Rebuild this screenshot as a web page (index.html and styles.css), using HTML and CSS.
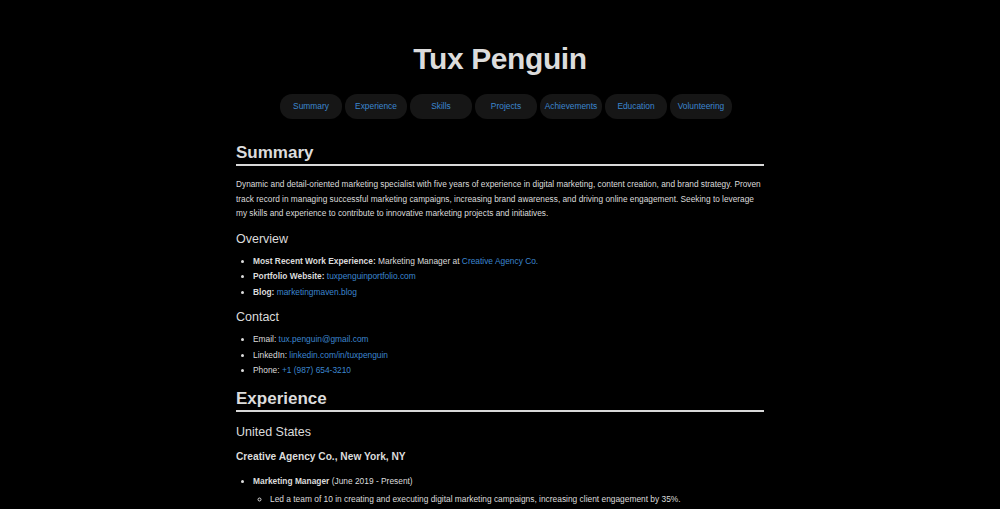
FILE: index.html
```html
<!DOCTYPE html>
<html lang="en">
<head>
    <meta charset="UTF-8">
    <meta name="viewport" content="width=device-width, initial-scale=1.0">
    <title>Tux Penguin - Resume</title>
    <link rel="stylesheet" href="styles.css">
</head>
<body>

    <header class="header">
        <h1 class="name">Tux Penguin</h1>
        <nav class="nav">
            <a href="#summary" class="nav-link">Summary</a>
            <a href="#experience" class="nav-link">Experience</a>
            <a href="#skills" class="nav-link">Skills</a>
            <a href="#projects" class="nav-link">Projects</a>
            <a href="#achievements" class="nav-link">Achievements</a>
            <a href="#education" class="nav-link">Education</a>
            <a href="#volunteering" class="nav-link">Volunteering</a>
        </nav>
    </header>

    <main class="container">
        <section id="summary">
            <h2 class="section-title">Summary</h2>
            <p class="text">Dynamic and detail-oriented marketing specialist with five years of experience in digital marketing, content creation, and brand strategy. Proven track record in managing successful marketing campaigns, increasing brand awareness, and driving online engagement. Seeking to leverage my skills and experience to contribute to innovative marketing projects and initiatives.</p>

            <h3 class="sub-title">Overview</h3>
            <ul class="list">
                <li><strong>Most Recent Work Experience:</strong> Marketing Manager at <a href="#">Creative Agency Co.</a></li>
                <li><strong>Portfolio Website:</strong> <a href="#">tuxpenguinportfolio.com</a></li>
                <li><strong>Blog:</strong> <a href="#">marketingmaven.blog</a></li>
            </ul>

            <h3 class="sub-title">Contact</h3>
            <ul class="list">
                <li>Email: <a href="#">tux.penguin@gmail.com</a></li>
                <li>LinkedIn: <a href="#">linkedin.com/in/tuxpenguin</a></li>
                <li>Phone: <a href="#">+1 (987) 654-3210</a></li>
            </ul>
        </section>

        <section id="experience">
            <h2 class="section-title">Experience</h2>
            <h3 class="sub-title">United States</h3>
            <h4 class="company">Creative Agency Co., New York, NY</h4>
            <ul class="list">
                <li><strong>Marketing Manager</strong> (June 2019 - Present)
                    <ul class="list sub-list">
                        <li>Led a team of 10 in creating and executing digital marketing campaigns, increasing client engagement by 35%.</li>
                    </ul>
                </li>
            </ul>
        </section>
    </main>

</body>
</html>
```

FILE: styles.css
```css
body {
    background-color: #000;
    color: #dcdcdc;
    font-family: "Liberation Sans", Arial, sans-serif;
    font-size: 8.4px;
    line-height: 14.5px;
    margin: 0;
    padding: 0;
}
a {
    color: #3c86cf;
    text-decoration: none;
}

/* Header */
.header {
    text-align: center;
    padding-top: 41px;
}
.name {
    font-size: 30px;
    font-weight: bold;
    margin: 0 0 17px;
    line-height: 36px;
    letter-spacing: -0.4px;
}
.nav {
    display: flex;
    justify-content: center;
    gap: 3px;
    padding-left: 12px;
}
.nav-link {
    display: block;
    width: 62px;
    height: 25px;
    line-height: 25px;
    background: #161616;
    border-radius: 12px;
    font-size: 8.4px;
}

/* Content */
.container {
    width: 528px;
    margin: 23px auto 0;
}
.section-title {
    font-size: 17px;
    margin: 0 0 11px;
    padding-bottom: 1px;
    line-height: 21px;
    border-bottom: 2px solid #d8d8d8;
}
.text {
    font-size: 8.3px;
    margin: 0 0 10px;
}
.sub-title {
    font-size: 12.5px;
    font-weight: normal;
    margin: 0 0 7px;
    line-height: 16px;
}
.company {
    font-size: 10.2px;
    margin: 10px 0 10px;
    line-height: 14px;
}
.list {
    margin: 0 0 10px;
    padding-left: 17px;
}
.list li {
    margin-bottom: 1px;
}
.sub-list {
    margin: 4px 0 0;
    list-style: circle;
}
#experience {
    margin-top: 10px;
}
#experience .section-title {
    margin-bottom: 12px;
}
```
